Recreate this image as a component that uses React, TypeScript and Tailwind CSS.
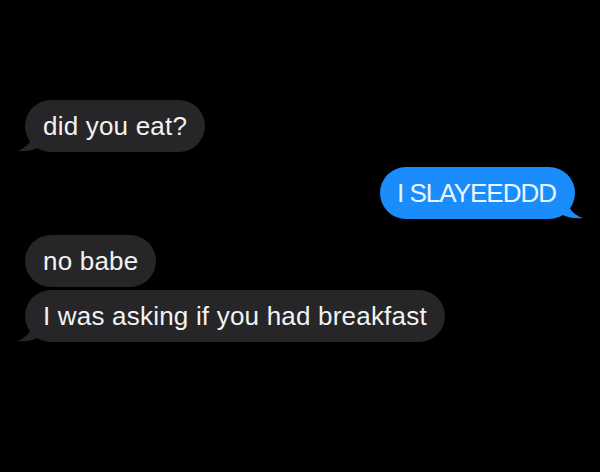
import React from 'react'

type Msg = { text: string; mine: boolean; tail: boolean; gap: string }

const messages: Msg[] = [
  { text: 'did you eat?', mine: false, tail: true, gap: 'mt-0' },
  { text: 'I SLAYEEDDD', mine: true, tail: true, gap: 'mt-[15px]' },
  { text: 'no babe', mine: false, tail: false, gap: 'mt-[16px]' },
  { text: 'I was asking if you had breakfast', mine: false, tail: true, gap: 'mt-[3px]' },
]

// the little curl under the last bubble of a run
function Tail({ mine }: { mine: boolean }) {
  const fill = mine ? '#1a8cfc' : '#262628'
  if (mine) {
    return (
      <svg className="absolute -right-[8px] bottom-0" width="22" height="22" viewBox="0 0 22 22">
        <path d="M6 0 C6 10 12 18 22 21 C14 22 7 21 0 17 Z" fill={fill} />
      </svg>
    )
  }
  return (
    <svg className="absolute -left-[8px] bottom-0" width="22" height="22" viewBox="0 0 22 22">
      <path d="M16 0 C16 10 10 18 0 21 C8 22 15 21 22 17 Z" fill={fill} />
    </svg>
  )
}

function Bubble({ m }: { m: Msg }) {
  return (
    <div className={`${m.gap} ${m.mine ? 'self-end mr-[25px]' : 'self-start ml-[25px]'}`}>
      <div
        className={`relative h-[52px] rounded-[26px] flex items-center text-[26px] leading-none ${
          m.mine
            ? 'bg-[#1a8cfc] text-[#eaf5ff] pl-[17px] pr-[19px] tracking-[-1px]'
            : 'bg-[#262628] text-[#f2f2f2] px-[18px] tracking-[0.2px]'
        }`}
      >
        {m.tail && <Tail mine={m.mine} />}
        <span className="relative pb-[1px]">{m.text}</span>
      </div>
    </div>
  )
}

export default function App() {
  return (
    <main
      className="w-[600px] h-[472px] bg-black flex flex-col pt-[100px] overflow-hidden"
      style={{ fontFamily: '"Liberation Sans", Arial, sans-serif' }}
    >
      {messages.map((m, i) => (
        <Bubble key={i} m={m} />
      ))}
    </main>
  )
}
